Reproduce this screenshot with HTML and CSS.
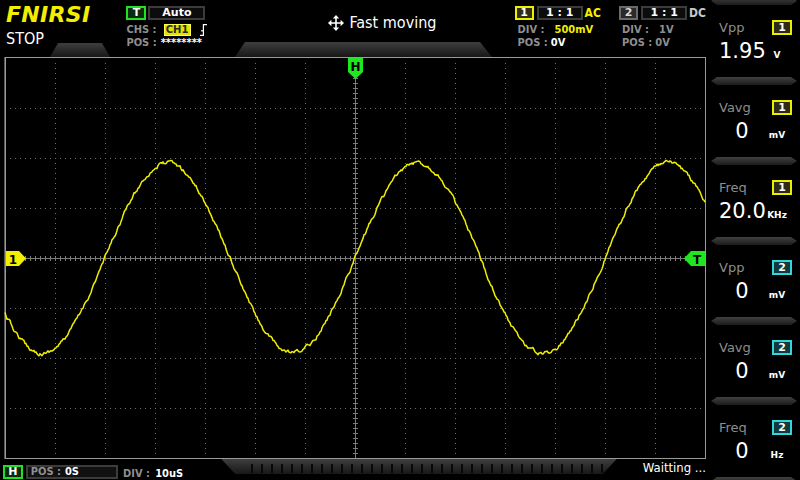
FILE: index.html
```html
<!DOCTYPE html>
<html lang="en">
<head>
    <meta charset="UTF-8">
    <meta name="viewport" content="width=device-width, initial-scale=1.0">
    <title>Scope</title>
    <link rel="stylesheet" href="styles.css">
</head>
<body>
<div class="screen">
    <div class="left">
        <div class="header">
            <div class="tab tab-a"></div>
            <div class="tab tab-b"></div>
            <div class="brand">
                <div class="logo">FNIRSI</div>
                <div class="state">STOP</div>
            </div>
            <div class="trig">
                <div class="row">
                    <span class="badge badge-green">T</span>
                    <span class="box box-auto">Auto</span>
                </div>
                <div class="row row-2">
                    <span class="lbl">CHS :</span>
                    <span class="chs">CH1</span>
                    <svg class="edge" viewBox="0 0 7 12" width="7" height="12">
                        <path d="M0 11.4h3.4V0.6H7" fill="none" stroke="#fff" stroke-width="1.2"/>
                        <path d="M1 6.8h2.4" stroke="#fff" stroke-width="1.2"/>
                    </svg>
                </div>
                <div class="row row-3">
                    <span class="lbl">POS :</span>
                    <span class="val stars">********</span>
                </div>
            </div>
            <div class="mode">
                <svg class="move" viewBox="0 0 16 16" width="16" height="16">
                    <path d="M8 2v12M2 8h12" stroke="#fff" stroke-width="1.6"/>
                    <path d="M8 0L4.8 3.4h6.4zM8 16l-3.2-3.4h6.4zM0 8l3.4-3.2v6.4zM16 8l-3.4-3.2v6.4z" fill="#fff"/>
                </svg>
                <span class="mode-text">Fast moving</span>
            </div>
            <div class="chan chan-1">
                <div class="row">
                    <span class="badge badge-yellow">1</span>
                    <span class="box box-ratio">1 : 1</span>
                    <span class="coup yellow">AC</span>
                </div>
                <div class="row row-2 ind">
                    <span class="lbl">DIV :</span>
                    <span class="val div-val yellow">500mV</span>
                </div>
                <div class="row row-3 ind">
                    <span class="lbl">POS :</span>
                    <span class="val pos-val">0V</span>
                </div>
            </div>
            <div class="chan chan-2">
                <div class="row">
                    <span class="badge badge-grey">2</span>
                    <span class="box box-ratio">1 : 1</span>
                    <span class="coup grey">DC</span>
                </div>
                <div class="row row-2 ind">
                    <span class="lbl">DIV :</span>
                    <span class="lbl div-val">1V</span>
                </div>
                <div class="row row-3 ind">
                    <span class="lbl">POS :</span>
                    <span class="lbl pos-val">0V</span>
                </div>
            </div>
        </div>

        <div class="plot">
            <svg class="plot-svg" width="706" height="402" viewBox="0 57 706 402">
                <g class="grid" stroke="#707070" stroke-width="1" stroke-dasharray="1 4">
                    <line x1="55.5" y1="63" x2="55.5" y2="458"/>
                    <line x1="105.5" y1="63" x2="105.5" y2="458"/>
                    <line x1="155.5" y1="63" x2="155.5" y2="458"/>
                    <line x1="205.5" y1="63" x2="205.5" y2="458"/>
                    <line x1="255.5" y1="63" x2="255.5" y2="458"/>
                    <line x1="305.5" y1="63" x2="305.5" y2="458"/>
                    <line x1="405.5" y1="63" x2="405.5" y2="458"/>
                    <line x1="455.5" y1="63" x2="455.5" y2="458"/>
                    <line x1="505.5" y1="63" x2="505.5" y2="458"/>
                    <line x1="555.5" y1="63" x2="555.5" y2="458"/>
                    <line x1="605.5" y1="63" x2="605.5" y2="458"/>
                    <line x1="655.5" y1="63" x2="655.5" y2="458"/>
                    <line x1="10" y1="108.5" x2="705" y2="108.5"/>
                    <line x1="10" y1="158.5" x2="705" y2="158.5"/>
                    <line x1="10" y1="208.5" x2="705" y2="208.5"/>
                    <line x1="10" y1="308.5" x2="705" y2="308.5"/>
                    <line x1="10" y1="358.5" x2="705" y2="358.5"/>
                    <line x1="10" y1="408.5" x2="705" y2="408.5"/>
                </g>
                <g class="axes" stroke="#7c7c7c">
                    <line x1="6" y1="258.5" x2="705" y2="258.5" stroke-width="1"/>
                    <line x1="355.5" y1="58" x2="355.5" y2="458" stroke-width="1"/>
                    <line x1="10" y1="258.5" x2="705" y2="258.5" stroke-width="5" stroke-dasharray="1 4"/>
                    <line x1="355.5" y1="63" x2="355.5" y2="458" stroke-width="5" stroke-dasharray="1 4"/>
                </g>
                <rect x="5.5" y="57.5" width="700" height="401" fill="none" stroke="#9a9a9a" stroke-width="1"/>
                <line x1="4.5" y1="57" x2="4.5" y2="459" stroke="#5a5a5a" stroke-width="1"/>
                <polyline id="trace" fill="none" stroke="#f0ef00" stroke-width="1.5" stroke-linejoin="round" points=""/>
                <polygon points="348,58 363,58 363,72 355.5,79 348,72" fill="#20e620"/>
                <text x="355.5" y="71" class="mark-text" text-anchor="middle">H</text>
                <polygon points="6,251 19,251 26,258.5 19,266 6,266" fill="#f2f000"/>
                <text x="13" y="263.5" class="mark-text" text-anchor="middle">1</text>
                <polygon points="705,251 691,251 684,258.5 691,266 705,266" fill="#20e620"/>
                <text x="697" y="263.5" class="mark-text" text-anchor="middle">T</text>
            </svg>
        </div>

        <div class="footer">
            <span class="badge badge-green foot-badge">H</span>
            <span class="box box-pos"><span class="lbl">POS :</span> <span class="val">0S</span></span>
            <span class="foot-div"><span class="lbl">DIV :</span> <span class="val">10uS</span></span>
            <span class="ruler"></span>
            <span class="status">Waitting ...</span>
        </div>
    </div>

    <div class="side">
        <div class="sep sep-top"></div>
        <div class="meas">
            <div class="meas-head"><span class="meas-name">Vpp</span><span class="tag tag-1">1</span></div>
            <div class="meas-val"><span class="num">1.95</span><span class="unit">V</span></div>
        </div>
        <div class="sep"></div>
        <div class="meas">
            <div class="meas-head"><span class="meas-name">Vavg</span><span class="tag tag-1">1</span></div>
            <div class="meas-val"><span class="num">0</span><span class="unit">mV</span></div>
        </div>
        <div class="sep"></div>
        <div class="meas">
            <div class="meas-head"><span class="meas-name">Freq</span><span class="tag tag-1">1</span></div>
            <div class="meas-val"><span class="num">20.0</span><span class="unit">KHz</span></div>
        </div>
        <div class="sep"></div>
        <div class="meas">
            <div class="meas-head"><span class="meas-name">Vpp</span><span class="tag tag-2">2</span></div>
            <div class="meas-val"><span class="num">0</span><span class="unit">mV</span></div>
        </div>
        <div class="sep"></div>
        <div class="meas">
            <div class="meas-head"><span class="meas-name">Vavg</span><span class="tag tag-2">2</span></div>
            <div class="meas-val"><span class="num">0</span><span class="unit">mV</span></div>
        </div>
        <div class="sep"></div>
        <div class="meas">
            <div class="meas-head"><span class="meas-name">Freq</span><span class="tag tag-2">2</span></div>
            <div class="meas-val"><span class="num">0</span><span class="unit">Hz</span></div>
        </div>
        <div class="sep"></div>
    </div>
</div>

<script>
    // channel 1 trace: 20kHz sine, 10us/div, 500mV/div, triggered at centre
    var seed = 12345;
    function rnd() {
        seed = (seed * 16807) % 2147483647;
        return seed / 2147483647 - 0.5;
    }
    var pts = [];
    var noise = 0;
    for (var x = 5; x <= 705; x++) {
        noise = noise * 0.7 + rnd() * 3.2;
        var y = 258 - 95 * Math.sin(2 * Math.PI * (x - 355) / 250) + noise;
        pts.push(x + ',' + y.toFixed(1));
    }
    document.getElementById('trace').setAttribute('points', pts.join(' '));
</script>
</body>
</html>
```

FILE: styles.css
```css
* {
    box-sizing: border-box;
}
body {
    margin: 0;
    padding: 0;
    background-color: black;
    color: white;
    font-family: "DejaVu Sans", sans-serif;
}
.screen {
    width: 800px;
    height: 480px;
    display: flex;
    overflow: hidden;
    background-color: black;
}
.left {
    width: 706px;
    display: flex;
    flex-direction: column;
}

/* ---------- header ---------- */
.header {
    height: 57px;
    position: relative;
    display: flex;
}
.tab {
    position: absolute;
    bottom: 0;
    background: linear-gradient(#3e3e3e, #171717);
}
.tab-a {
    left: 50px;
    width: 60px;
    height: 14px;
    clip-path: polygon(8px 0, 52px 0, 100% 100%, 0 100%);
}
.tab-b {
    left: 235px;
    width: 257px;
    height: 15px;
    clip-path: polygon(10px 0, calc(100% - 12px) 0, 100% 100%, 0 100%);
}
.brand {
    width: 127px;
    padding: 4px 0 0 6px;
}
.logo {
    font-size: 22px;
    line-height: 22px;
    font-weight: bold;
    font-style: italic;
    color: #f4ef00;
    letter-spacing: 0.3px;
}
.state {
    margin-top: 4px;
    font-size: 16px;
    line-height: 18px;
    font-stretch: condensed;
}
.row {
    display: flex;
    align-items: center;
    height: 14px;
}
.row-2 {
    margin-top: 4px;
    height: 12px;
}
.row-3 {
    margin-top: 1px;
    height: 12px;
}
.ind {
    padding-left: 3px;
}
.trig {
    width: 203px;
    padding-top: 6px;
}
.lbl {
    font-size: 11px;
    font-weight: bold;
    font-stretch: condensed;
    color: #8f8f8f;
    line-height: 12px;
}
.val {
    font-size: 11px;
    font-weight: bold;
    font-stretch: condensed;
    color: white;
    line-height: 12px;
}
.yellow {
    color: #f2f000;
}
.grey {
    color: #c8c8c8;
}
.badge {
    width: 20px;
    height: 14px;
    border: 2px solid;
    font-size: 11px;
    font-weight: bold;
    line-height: 10px;
    text-align: center;
    color: white;
}
.badge-green {
    border-color: #22e022;
    background-color: #0c2a0c;
}
.badge-yellow {
    width: 19px;
    border-color: #eeee00;
    background-color: #2e2e14;
}
.badge-grey {
    width: 19px;
    border-color: #6a6a6a;
    background-color: #2a2a2a;
    color: #dcdcdc;
}
.box {
    height: 14px;
    border: 2px solid #3c3c3c;
    background-color: #0c0c0c;
    font-size: 11px;
    font-weight: bold;
    line-height: 10px;
    text-align: center;
    color: white;
}
.box-auto {
    width: 57px;
    margin-left: 2px;
}
.box-ratio {
    width: 46px;
    margin-left: 3px;
}
.coup {
    margin-left: 2px;
    font-size: 12px;
    font-weight: bold;
    font-stretch: condensed;
}
.chs {
    margin-left: 7px;
    width: 27px;
    height: 12px;
    background-color: #e4e200;
    border: 1px solid #ffff50;
    color: #2a2a2a;
    font-size: 10px;
    font-weight: bold;
    line-height: 10px;
    text-align: center;
}
.edge {
    margin-left: 9px;
}
.stars {
    margin-left: 4px;
}
.mode {
    width: 187px;
    padding-top: 14px;
    display: flex;
    align-items: flex-start;
}
.move {
    margin-top: 1px;
}
.mode-text {
    margin-left: 5px;
    font-size: 16px;
    line-height: 18px;
    font-stretch: condensed;
}
.chan {
    width: 105px;
    padding-top: 6px;
}
.chan-2 {
    width: auto;
}
.div-val {
    margin-left: 10px;
}
.pos-val {
    margin-left: 3px;
}

/* ---------- plot ---------- */
.plot {
    height: 402px;
}
.plot-svg {
    display: block;
}
.mark-text {
    font-family: "DejaVu Sans", sans-serif;
    font-size: 12px;
    font-weight: bold;
    fill: black;
}

/* ---------- footer ---------- */
.footer {
    height: 21px;
    display: flex;
    align-items: flex-start;
}
.foot-badge {
    margin: 6px 0 0 3px;
}
.box-pos {
    width: 93px;
    margin: 6px 0 0 3px;
    padding-left: 3px;
    text-align: left;
    background-color: #111;
    line-height: 10px;
}
.box-pos .lbl,
.box-pos .val,
.foot-div .lbl,
.foot-div .val {
    line-height: 10px;
}
.foot-div {
    width: 104px;
    margin-top: 8px;
    padding-left: 5px;
    line-height: 10px;
}
.ruler {
    width: 399px;
    height: 15px;
    clip-path: polygon(0 0, 100% 0, calc(100% - 14px) 100%, 14px 100%);
    background:
        repeating-linear-gradient(90deg, #080808 0 2px, transparent 2px 10px) 30px 5px / 360px 9px no-repeat,
        linear-gradient(#3e3e3e, #181818);
}
.status {
    margin: 2px 0 0 26px;
    font-size: 13px;
    line-height: 14px;
    font-stretch: condensed;
    white-space: nowrap;
}

/* ---------- measurement side panel ---------- */
.side {
    width: 94px;
    display: flex;
    flex-direction: column;
}
.sep {
    flex: none;
    width: 86px;
    height: 8px;
    margin-left: 5px;
    background: linear-gradient(#404040, #1c1c1c);
    clip-path: polygon(0 50%, 6px 0, calc(100% - 6px) 0, 100% 50%, calc(100% - 6px) 100%, 6px 100%);
}
.sep-top {
    margin-top: -3px;
}
.meas {
    flex: none;
    height: 72px;
    padding: 15px 8px 0 13px;
}
.meas-head {
    display: flex;
    justify-content: space-between;
    align-items: center;
    height: 15px;
}
.meas-name {
    font-size: 13px;
    color: #8e8e8e;
}
.tag {
    width: 20px;
    height: 15px;
    border: 2px solid;
    font-size: 11px;
    font-weight: bold;
    line-height: 11px;
    text-align: center;
    color: white;
}
.tag-1 {
    border-color: #ecec00;
    background-color: #2c2c14;
}
.tag-2 {
    border-color: #34d4dc;
    background-color: #113a3c;
}
.meas-val {
    display: flex;
    align-items: baseline;
    margin-top: 4px;
    height: 24px;
    line-height: 24px;
}
.num {
    width: 46px;
    text-align: center;
    font-size: 21px;
}
.unit {
    width: 24px;
    text-align: center;
    font-size: 9px;
    font-weight: bold;
}
```
